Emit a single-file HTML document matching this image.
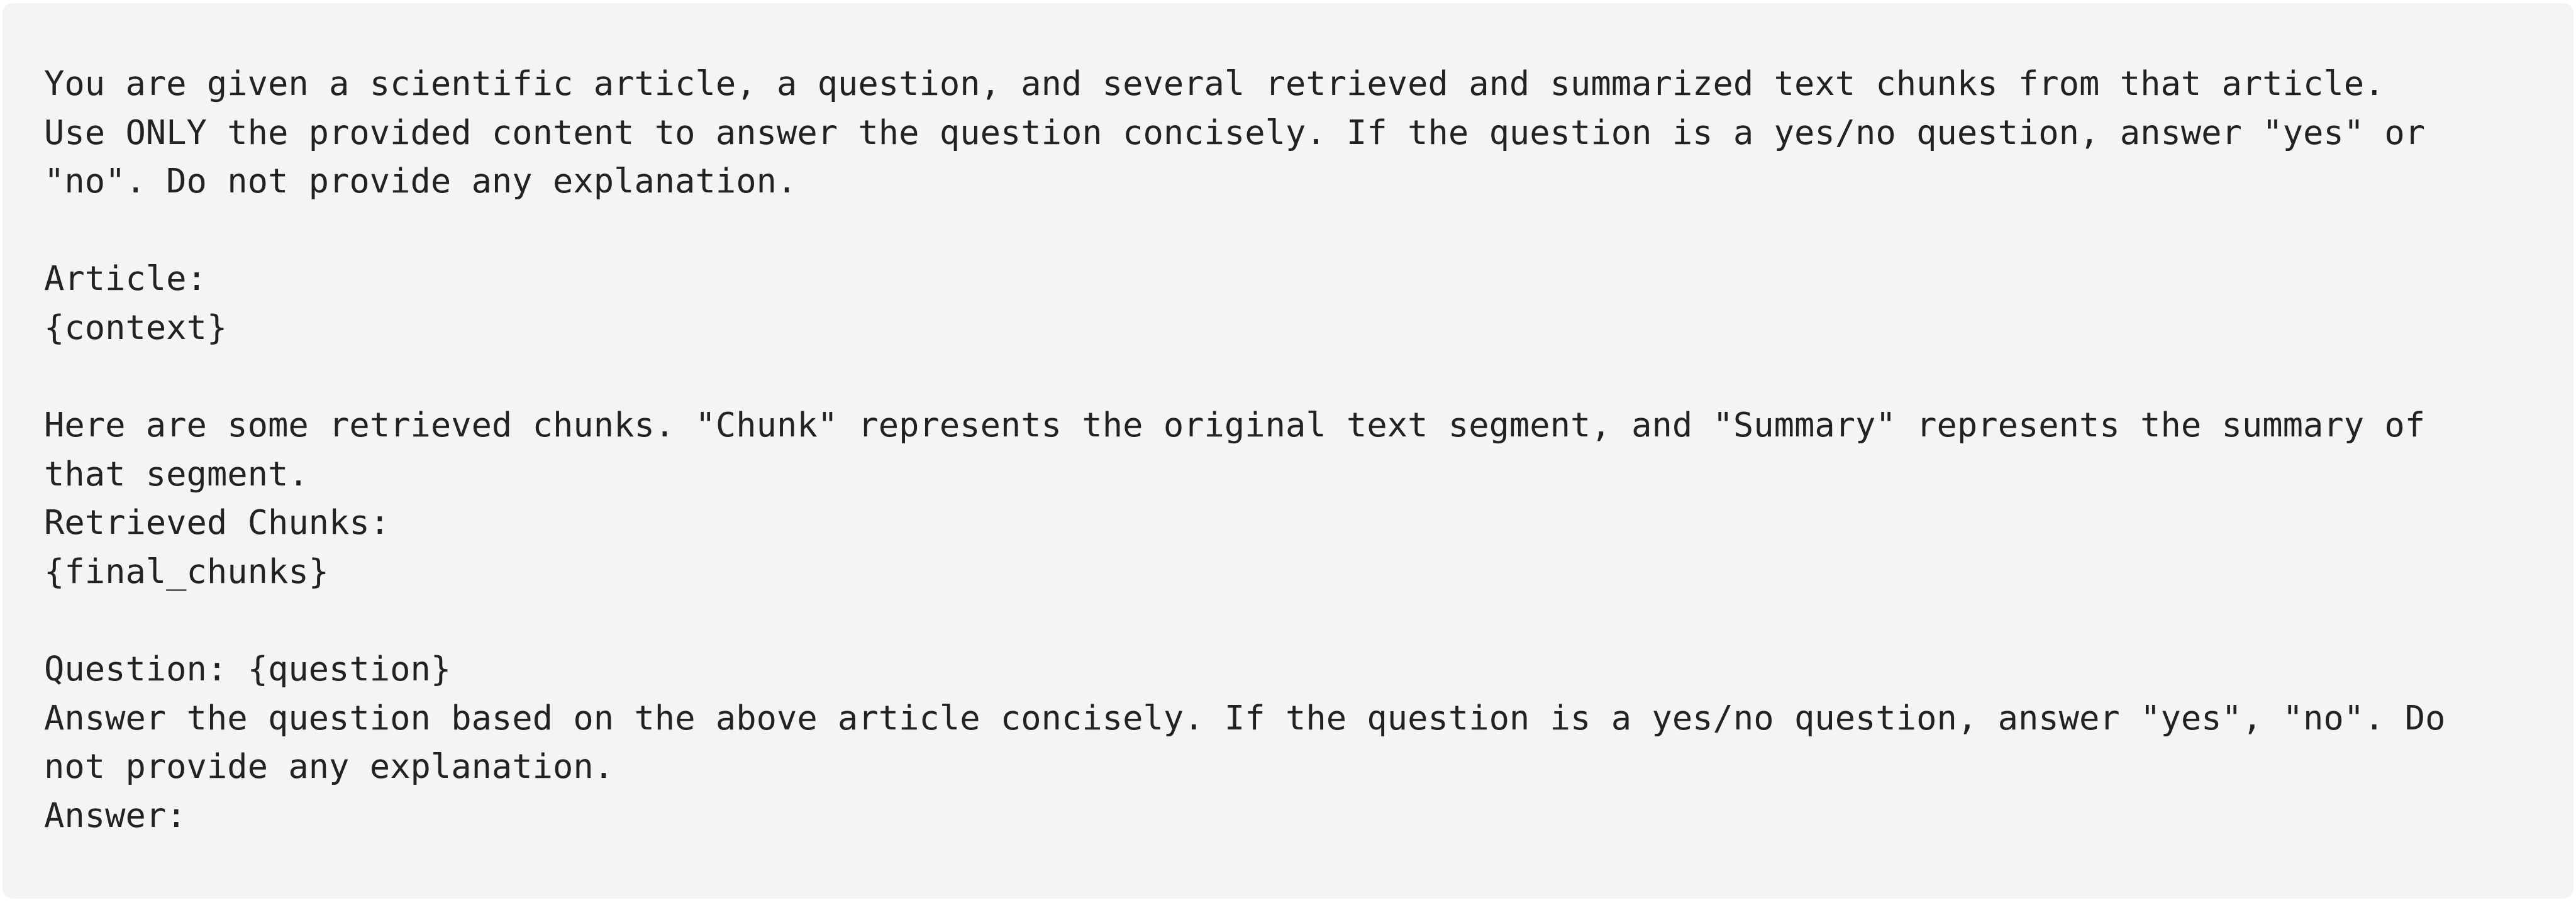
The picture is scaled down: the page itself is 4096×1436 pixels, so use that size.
<!DOCTYPE html>
<html>
<head>
<meta charset="utf-8">
<style>
html,body{margin:0;padding:0;background:#fff;width:4096px;height:1436px;overflow:hidden;}
.box{position:absolute;left:4px;top:5px;width:4088px;height:1424px;background:#f4f4f4;border-radius:16px;box-sizing:border-box;}
pre{position:absolute;left:66px;top:89px;margin:0;font-family:"DejaVu Sans Mono","Liberation Mono",monospace;font-size:53.75px;line-height:77.6px;color:#222;white-space:pre;}
</style>
</head>
<body>
<div class="box"><pre>You are given a scientific article, a question, and several retrieved and summarized text chunks from that article.
Use ONLY the provided content to answer the question concisely. If the question is a yes/no question, answer "yes" or
"no". Do not provide any explanation.

Article:
{context}

Here are some retrieved chunks. "Chunk" represents the original text segment, and "Summary" represents the summary of
that segment.
Retrieved Chunks:
{final_chunks}

Question: {question}
Answer the question based on the above article concisely. If the question is a yes/no question, answer "yes", "no". Do
not provide any explanation.
Answer:</pre></div>
</body>
</html>
